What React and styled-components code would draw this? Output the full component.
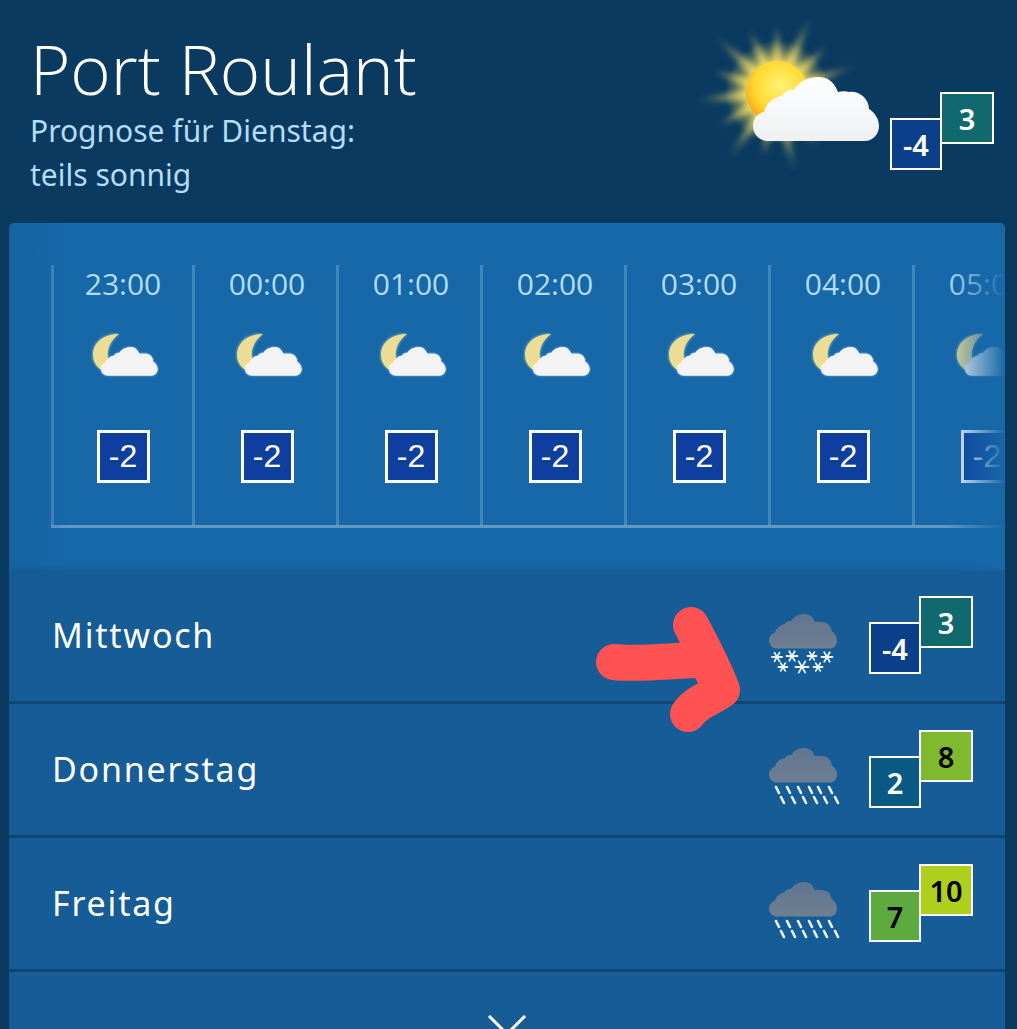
import React from 'react';
import styled, { createGlobalStyle } from 'styled-components';

const GlobalStyle = createGlobalStyle`
  html, body {
    margin: 0;
    padding: 0;
    background: #0a3a60;
  }
  body {
    font-family: "Noto Sans", "Open Sans", sans-serif;
  }
`;

const Page = styled.div`
  position: relative;
  width: 1017px;
  height: 1029px;
  overflow: hidden;
  background: #0a3a60;
`;

const Header = styled.header`
  height: 223px;
  display: flex;
  justify-content: space-between;
  box-sizing: border-box;
  padding: 28px 23px 0 30px;
`;

const Place = styled.h1`
  margin: 0;
  font-family: "Open Sans", sans-serif;
  font-weight: 300;
  font-size: 69px;
  line-height: 81px;
  color: #fff;
`;

const Forecast = styled.p`
  margin: 0;
  font-size: 30px;
  line-height: 44px;
  color: #b5dcf8;
`;

const Summary = styled.div`
  display: flex;
  align-items: flex-start;
  margin-top: -8px;
`;

const SummaryPair = styled.div`
  margin: 72px 0 0 3px;
`;

const Card = styled.main`
  margin: 0 12px 0 9px;
  border-radius: 5px 5px 0 0;
  overflow: hidden;
`;

const HourPanel = styled.section`
  position: relative;
  background: #1768a8;
  padding: 42px 0 42px 42px;
  box-shadow: inset 0 -6px 8px -6px rgba(10, 58, 96, 0.35);
`;

const HourStrip = styled.div`
  display: flex;
  overflow: hidden;
  border-bottom: 3px solid rgba(255, 255, 255, 0.32);
`;

const HourColumn = styled.div`
  flex: 0 0 144px;
  box-sizing: border-box;
  height: 260px;
  border-right: 3px solid rgba(255, 255, 255, 0.2);
  border-left: 3px solid transparent;
  &:first-child {
    border-left-color: rgba(255, 255, 255, 0.2);
  }
  display: flex;
  flex-direction: column;
  align-items: center;
`;

const Time = styled.div`
  font-family: "Open Sans", sans-serif;
  font-size: 30px;
  line-height: 38px;
  color: #b5dcf8;
`;

const MoonSlot = styled.div`
  height: 48px;
  margin-top: 29px;
`;

const HourBadge = styled.div`
  width: 53px;
  height: 53px;
  box-sizing: border-box;
  margin-top: 50px;
  border: 3px solid #fff;
  background: #0f3f9e;
  color: #fff;
  font-family: "Liberation Sans", Arial, sans-serif;
  font-size: 32px;
  display: flex;
  align-items: center;
  justify-content: center;
`;

const Fade = styled.div`
  position: absolute;
  top: 0;
  bottom: 0;
  ${(p) => (p.$side === 'left' ? 'left: 0; width: 60px;' : 'right: 0; width: 60px;')}
  background: ${(p) =>
    p.$side === 'left'
      ? 'linear-gradient(to left, rgba(23, 104, 168, 0), rgba(20, 92, 150, 0.4))'
      : 'linear-gradient(to right, rgba(23, 104, 168, 0), #1768a8)'};
`;

const DayList = styled.div`
  background: #0e4676;
`;

const DayRow = styled.div`
  height: 131px;
  box-sizing: border-box;
  display: flex;
  align-items: center;
  padding: 0 32px 1px 43px;
  background: #165c96;
  & + & {
    margin-top: 3px;
  }
`;

const DayName = styled.div`
  flex: 1;
  font-size: 34px;
  letter-spacing: 1.8px;
  color: #fff;
`;

const DayIcon = styled.div`
  width: 72px;
  height: 62px;
  margin: 18px 29px 0 0;
`;

const MorePanel = styled.div`
  height: 60px;
  box-sizing: border-box;
  padding-top: 43px;
  margin-top: 3px;
  background: #165c96;
  display: flex;
  justify-content: center;
`;

const Pair = styled.div`
  display: flex;
  flex: none;
  width: 104px;
`;

const TempBox = styled.div`
  width: ${(p) => (p.$high ? '54px' : '52px')};
  height: 52px;
  box-sizing: border-box;
  flex: none;
  border: 2px solid #fff;
  background: ${(p) => p.$bg};
  color: ${(p) => (p.$dark ? '#000' : '#fff')};
  font-size: 29px;
  font-weight: 600;
  display: flex;
  align-items: center;
  justify-content: center;
  margin-top: ${(p) => (p.$high ? '0' : '26px')};
  margin-left: ${(p) => (p.$high ? '-2px' : '0')};
  margin-bottom: ${(p) => (p.$high ? '26px' : '0')};
`;

const ArrowMark = styled.svg`
  position: absolute;
  left: 590px;
  top: 600px;
`;

const CLOUD =
  'M16 64 C6 64 0 57 0 49 C0 41 5 36 11 35 C13 26 21 20 29 19 C31 15 36 12 41 13 C45 5 55 0 65 0 C74 0 81 4 85 15 C89 14 93 14 96 15 C104 13 116 20 116 32 C122 36 126 42 126 49 C126 57 120 64 112 64 Z';

const SunCloudIcon = () => {
  const rays = [0, 24, 48, 72, 96, 120, 144, 168, 192, 216, 240, 264, 288, 312, 336];
  return (
    <svg width="190" height="150" viewBox="0 0 190 150">
      <defs>
        <radialGradient id="sunFill" cx="55%" cy="40%" r="60%">
          <stop offset="0%" stopColor="#fff275" />
          <stop offset="70%" stopColor="#ffd92e" />
          <stop offset="100%" stopColor="#f7a81d" />
        </radialGradient>
        <radialGradient id="sunGlow">
          <stop offset="40%" stopColor="#ffe15a" stopOpacity="0.85" />
          <stop offset="100%" stopColor="#ffe15a" stopOpacity="0" />
        </radialGradient>
        <radialGradient id="rayFill" gradientUnits="userSpaceOnUse" cx="0" cy="0" r="84">
          <stop offset="30%" stopColor="#fbe56a" stopOpacity="0.95" />
          <stop offset="100%" stopColor="#d8c860" stopOpacity="0.05" />
        </radialGradient>
        <linearGradient id="whiteCloud" x1="0" y1="0" x2="0" y2="1">
          <stop offset="0%" stopColor="#ffffff" />
          <stop offset="100%" stopColor="#eef0f2" />
        </linearGradient>
        <filter id="rayBlur" x="-30%" y="-30%" width="160%" height="160%">
          <feGaussianBlur stdDeviation="3" />
        </filter>
      </defs>
      <circle cx="80" cy="72" r="52" fill="url(#sunGlow)" />
      <g filter="url(#rayBlur)" transform="translate(80 72)">
        {rays.map((a, i) => (
          <polygon
            key={a}
            points={`-6,-24 6,-24 0,${i % 2 ? -84 : -66}`}
            fill="url(#rayFill)"
            transform={`rotate(${a})`}
          />
        ))}
      </g>
      <circle cx="80" cy="72" r="31" fill="url(#sunFill)" />
      <g transform="translate(56 57)">
        <path d={CLOUD} fill="url(#whiteCloud)" />
      </g>
    </svg>
  );
};

const MoonCloudIcon = () => (
  <svg width="72" height="48" viewBox="0 0 72 48">
    <defs>
      <filter id="moonGlow" x="-40%" y="-40%" width="180%" height="180%">
        <feGaussianBlur stdDeviation="1.8" />
      </filter>
    </defs>
    <path d="M32 2 C17 2 6 10 6 23 C6 30 10 36 17 39 L22 30 C18 20 23 8 32 2 Z" fill="#fff3b5" opacity="0.7" filter="url(#moonGlow)" />
    <path d="M32 2 C17 2 6 10 6 23 C6 30 10 36 17 39 L22 30 C18 20 23 8 32 2 Z" fill="#ecdd94" />
    <g transform="translate(14 15) scale(0.45)">
      <path d={CLOUD} fill="#fff" opacity="0.5" filter="url(#moonGlow)" />
      <path d={CLOUD} fill="#f2f3f5" />
    </g>
  </svg>
);

const DarkCloud = ({ id }) => (
  <g transform="translate(1 1) scale(0.54)">
    <defs>
      <linearGradient id={id} x1="0" y1="0" x2="0" y2="1">
        <stop offset="0%" stopColor="#5f7590" />
        <stop offset="100%" stopColor="#6f7f92" />
      </linearGradient>
    </defs>
    <path d={CLOUD} fill={`url(#${id})`} />
  </g>
);

const Flake = ({ x, y, r }) => (
  <g transform={`translate(${x} ${y})`} stroke="#eef4fa" strokeWidth="1.8" strokeLinecap="round">
    <line x1={-r} x2={r} y1="0" y2="0" />
    <line x1={-r / 2} x2={r / 2} y1={-r * 0.87} y2={r * 0.87} />
    <line x1={-r / 2} x2={r / 2} y1={r * 0.87} y2={-r * 0.87} />
  </g>
);

const SnowIcon = () => (
  <svg width="72" height="62" viewBox="0 0 72 62">
    <DarkCloud id="snowCloud" />
    <Flake x={9} y={44} r={5} />
    <Flake x={24} y={43} r={5.5} />
    <Flake x={44} y={43} r={4.5} />
    <Flake x={59} y={44} r={5.5} />
    <Flake x={15} y={54} r={4.5} />
    <Flake x={34} y={54} r={6.5} />
    <Flake x={50} y={54} r={4.5} />
  </svg>
);

const RainIcon = ({ id }) => {
  const top = [8, 19, 30, 41, 50, 61];
  const bottom = [13, 24, 35, 46, 56, 67];
  return (
    <svg width="72" height="62" viewBox="0 0 72 62">
      <DarkCloud id={id} />
      <g stroke="#eef4fa" strokeWidth="2.6" strokeLinecap="round">
        {top.map((x) => (
          <line key={x} x1={x} y1={40} x2={x + 3} y2={46} />
        ))}
        {bottom.map((x) => (
          <line key={x} x1={x} y1={50} x2={x + 3} y2={56} />
        ))}
      </g>
    </svg>
  );
};

const TempPair = ({ low, high }) => (
  <Pair>
    <TempBox $bg={low.bg} $dark={low.dark}>{low.value}</TempBox>
    <TempBox $high $bg={high.bg} $dark={high.dark}>{high.value}</TempBox>
  </Pair>
);

const hours = ['23:00', '00:00', '01:00', '02:00', '03:00', '04:00', '05:00'];

const days = [
  { name: 'Mittwoch', icon: <SnowIcon />, low: { value: '-4', bg: '#0b3f8a' }, high: { value: '3', bg: '#12686f' } },
  { name: 'Donnerstag', icon: <RainIcon id="rainCloudA" />, low: { value: '2', bg: '#0a5a85' }, high: { value: '8', bg: '#7fb92f', dark: true } },
  { name: 'Freitag', icon: <RainIcon id="rainCloudB" />, low: { value: '7', bg: '#5dab3f', dark: true }, high: { value: '10', bg: '#aecf1b', dark: true } },
];

export default function App() {
  return (
    <Page>
      <GlobalStyle />
      <Header>
        <div>
          <Place>Port Roulant</Place>
          <Forecast>Prognose für Dienstag:<br />teils sonnig</Forecast>
        </div>
        <Summary>
          <SunCloudIcon />
          <SummaryPair>
            <TempPair low={{ value: '-4', bg: '#0b3f8a' }} high={{ value: '3', bg: '#12686f' }} />
          </SummaryPair>
        </Summary>
      </Header>
      <Card>
        <HourPanel>
          <HourStrip>
            {hours.map((h) => (
              <HourColumn key={h}>
                <Time>{h}</Time>
                <MoonSlot><MoonCloudIcon /></MoonSlot>
                <HourBadge>-2</HourBadge>
              </HourColumn>
            ))}
          </HourStrip>
          <Fade $side="left" />
          <Fade $side="right" />
        </HourPanel>
        <DayList>
          {days.map((d) => (
            <DayRow key={d.name}>
              <DayName>{d.name}</DayName>
              <DayIcon>{d.icon}</DayIcon>
              <TempPair low={d.low} high={d.high} />
            </DayRow>
          ))}
          <MorePanel>
            <svg width="40" height="20" viewBox="0 0 40 20">
              <polyline points="2,1 20,19 38,1" fill="none" stroke="#fff" strokeWidth="3" />
            </svg>
          </MorePanel>
        </DayList>
      </Card>
      <ArrowMark width="170" height="150" viewBox="0 0 170 150">
        <path
          d="M24 62 C50 65 85 60 116 60 L132 90 M101 25 C112 46 124 68 132 90 C118 100 106 102 98 114"
          fill="none"
          stroke="#ff5252"
          strokeWidth="36"
          strokeLinecap="round"
          strokeLinejoin="round"
        />
      </ArrowMark>
    </Page>
  );
}
